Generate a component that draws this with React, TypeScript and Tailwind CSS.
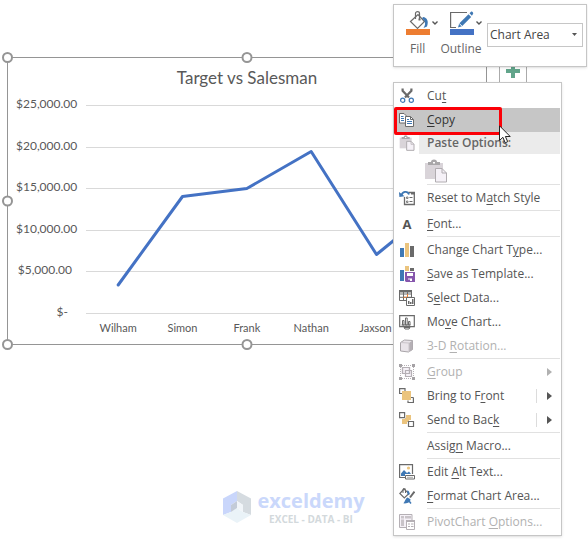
import type { ReactNode } from 'react';

const GRAY = '#6a6a6a';
const BLUE = '#3f78b4';
const TAN = '#ebc47e';
const FADED = '#b5b0b5';

const gridLines = [0, 1, 2, 3, 4, 5];
const axisLabels = ['$25,000.00', '$20,000.00', '$15,000.00', '$10,000.00', '$5,000.00'];
const salesmen = ['Wilham', 'Simon', 'Frank', 'Nathan', 'Jaxson', ''];

/* ---------- Icons ---------- */

function Icon({ children }: { children?: ReactNode }) {
  return (
    <svg viewBox="0 0 16 16" className="h-4 w-4 shrink-0" fill="none" aria-hidden="true">
      {children}
    </svg>
  );
}

function CutIcon() {
  return (
    <Icon>
      <path d="M3.6 .5v2.2L10 9.6M12.4 .5v2.2L6 9.6" stroke={GRAY} strokeWidth="2.2" />
      <circle cx="3.7" cy="12.2" r="2.1" stroke={BLUE} strokeWidth="1.2" />
      <circle cx="12.3" cy="12.2" r="2.1" stroke={BLUE} strokeWidth="1.2" />
    </Icon>
  );
}

function CopyIcon() {
  return (
    <Icon>
      <path d="M.5 1.500h4.500l2 2v7.500h-6.500z" fill="#fff" stroke={GRAY} />
      <path d="M2 4.500h2.500M2 6.500h3M2 8.500h3" stroke={BLUE} />
      <path d="M6.500 4.500h5l3 3v7h-8z" fill="#fff" stroke={GRAY} />
      <path d="M11.500 4.500v3h3" stroke={GRAY} />
      <path d="M8 7.500h2M8 9.500h5M8 11.500h5" stroke={BLUE} />
    </Icon>
  );
}

function PasteIcon({ large }: { large?: boolean }) {
  return (
    <svg viewBox="0 0 22 24" className={large ? 'h-6 w-[22px]' : 'h-4 w-4 shrink-0'} aria-hidden="true">
      <path d="M0 4h18v16H0z" fill="#d9d4d9" />
      <path d="M3 6V3h3a3 2.500 0 0 1 6 0h3v3z" fill="#a9a7a9" />
      <path d="M8 3h2v1.500H8z" fill="#fff" />
      <path d="M10.500 9.500h6.500l4.500 4.500v9h-11z" fill="#f5f1f7" stroke="#b0acb0" strokeWidth={large ? 1 : 1.5} />
      <path d="M17 9.500V14h4.500" fill="none" stroke="#b0acb0" />
    </svg>
  );
}

function ResetIcon() {
  return (
    <Icon>
      <path d="M9.500 2.500H15.300V14.500H5.500V7" stroke={GRAY} strokeWidth="1.300" />
      <path d="M12 2h4v2.500h-4z" fill={GRAY} />
      <path d="M7.500 7h1.500v1.500H7.500zM7.500 11h1.500v1.500H7.500z" stroke={GRAY} strokeWidth=".8" />
      <path d="M10.500 7.500h3M10.500 11.500h3" stroke={GRAY} />
      <path d="M2.500 5.500C3 1.500 8.500.3 10 4.500" stroke={BLUE} strokeWidth="1.800" />
      <path d="M0 2l.4 5 5.200-.7z" fill={BLUE} />
    </Icon>
  );
}

function FontIcon() {
  return <span className="w-4 shrink-0 text-center text-[13px] leading-4 font-bold text-[#555]">A</span>;
}

function ChartTypeIcon() {
  return (
    <Icon>
      <path d="M1 6h4v9H1z" fill={BLUE} />
      <path d="M6 1h4v14H6z" fill={TAN} />
      <path d="M11 4h4v11h-4z" fill={GRAY} />
    </Icon>
  );
}

function TemplateIcon() {
  return (
    <Icon>
      <path d="M1 4h4v11H1z" fill={BLUE} />
      <path d="M6 0h4v5H6z" fill={TAN} />
      <path d="M11 2h4v3h-4z" fill={GRAY} />
      <path d="M6 6h10v10H7l-1-1z" fill="#8757ad" />
      <path d="M8 7h6v3H8zM9 12.500h4V15h-2v-1.500H9z" fill="#fff" />
    </Icon>
  );
}

function SelectDataIcon() {
  return (
    <Icon>
      <path d="M.5.5h12v10H.5zM.5 4h12M.5 7.300h12M4.500 2v8.500M8.500 2v4" stroke={GRAY} />
      <path d="M0 0h13v2.500H0z" fill={GRAY} />
      <path d="M4.500 7.300h4V4" stroke="#ed7d31" />
      <path d="M7.500 7.500h8v8h-8z" fill="#fff" stroke={GRAY} />
      <path d="M9 11h1.500v3H9zM11 12h1.500v2H11zM13 9h1.500v5H13z" fill={GRAY} />
    </Icon>
  );
}

function MoveChartIcon() {
  return (
    <Icon>
      <path d="M.7 1.700h14.600v11H.7z" stroke={GRAY} strokeWidth="1.200" />
      <path d="M3.500 6.500h1.500V11H3.500zM6.500 4h1.700v7H6.500zM9.500 7.500H11V11H9.500z" stroke={GRAY} />
      <path d="M2.500 11h9" stroke={GRAY} />
      <path d="M5 13.500h6l-1 1.500H6z" fill="#fff" stroke={GRAY} />
    </Icon>
  );
}

function RotationIcon() {
  return (
    <Icon>
      <path d="M1.500 4.500l4-2.500 8 .5v9L9.500 14l-8-1z" fill="#e9e4e9" stroke="#a9a5a9" strokeLinejoin="round" />
      <path d="M10 5l3.500-2.500v9L10 14z" fill="#b5b0b5" />
      <path d="M1.500 4.500L10 5v9" stroke="#c9c4c9" />
    </Icon>
  );
}

function GroupIcon() {
  return (
    <Icon>
      <path d="M3.500 3.500h7v6h-7zM6.500 6.500h6v6h-6z" fill="#f5f1f7" stroke={FADED} strokeWidth="1.200" />
      <path d="M3.500 3.500h7v6h-7z" stroke={FADED} strokeWidth="1.200" />
      <path d="M3 1.500h10M3 14.500h10M1.500 3v10M14.500 3v10" stroke={FADED} strokeDasharray="1 1" />
      <path d="M0 0h3v3H0zM13 0h3v3h-3zM0 13h3v3H0zM13 13h3v3h-3z" fill="#a5a2a5" />
    </Icon>
  );
}

function FrontIcon() {
  return (
    <Icon>
      <path d="M.6 6V.6h5.400V3M14.400 9.500v5H9v-2M.6 5.500H3M12 9.500h2.400" stroke={GRAY} strokeWidth="1.200" />
      <path d="M3 3h9v9H3z" fill={TAN} />
    </Icon>
  );
}

function BackIcon() {
  return (
    <Icon>
      <path d="M7 3h5v5H7zM3 7h5v5H3zM6 6h4v4H6z" fill={TAN} />
      <path d="M.6.600h5v5h-5zM9.500 9.500h5v5h-5z" fill="#fff" stroke={GRAY} strokeWidth="1.200" />
    </Icon>
  );
}

function AltTextIcon() {
  return (
    <Icon>
      <path d="M13.500 10V.6H.6v12.900H6" stroke={GRAY} strokeWidth="1.200" />
      <circle cx="9.500" cy="4" r="1.600" fill={TAN} />
      <path d="M2 12V9.500L5 6l3 3 2-1.500 2 2.500H6v2z" fill={BLUE} />
      <path d="M6.500 11.500h9v3.500h-9z" fill="#fff" stroke={GRAY} />
      <path d="M8 13.300h6" stroke="#aaa" />
    </Icon>
  );
}

function FormatIcon() {
  return (
    <Icon>
      <path d="M5 1L.8 5.500l4.500 4.500L10 5.500z" fill="#fff" stroke={GRAY} strokeWidth="1.200" />
      <path d="M4 5V1.500C4-.2 6.500-.2 6.500 1.500V5" stroke={GRAY} />
      <path d="M8 2.500c2 0 3 1.500 2.200 5L8.500 6z" fill={BLUE} />
      <path d="M15.500 3.500L11 9.500" stroke={GRAY} strokeWidth="2" />
      <path d="M8.500 9.500l3 1.800c0 3-2.500 4.500-7.500 4 2-.6 2-4.600 4.500-5.800z" fill={BLUE} />
      <path d="M10 13l2 2.500" stroke={BLUE} strokeWidth="1.500" />
    </Icon>
  );
}

function PivotIcon() {
  return (
    <Icon>
      <path d="M.5.500h12.500v13H.5z" fill="#f5f1f7" stroke={FADED} />
      <path d="M2 2h3v2.500H2zM6 2h6v2.500H6zM2 5.500h3V12H2z" fill="#c9c4c9" />
      <path d="M7.500 6.500h8v9h-8z" fill="#fff" stroke={FADED} />
      <path d="M7 6h9v2H7z" fill={FADED} />
      <path d="M9 10h2M12 10h2.500M9 12.500h2M12 12.500h2.500" stroke={FADED} strokeWidth="1.200" />
    </Icon>
  );
}

/* ---------- Chart ---------- */

function Handle({ className }: { className: string }) {
  return <span className={`absolute h-[11px] w-[11px] rounded-full border-2 border-[#959595] bg-white ${className}`} />;
}

function Chart() {
  return (
    <section className="relative mt-[57px] ml-[7px] w-full max-w-[480px] border border-[#959595] py-2 font-[Lato,sans-serif] text-[#595959]">
      <h1 className="text-center text-[17px] leading-6">Target vs Salesman</h1>
      <div className="mt-[7px] flex pr-3.5 pl-2">
        <div className="flex h-[222px] w-14 flex-col justify-between text-right text-[12px] leading-[14px]">
          {axisLabels.map((label) => (
            <span key={label}>{label}</span>
          ))}
          <span className="pr-1">$-</span>
        </div>
        <div className="ml-3.5 flex-1 pt-2">
          <svg viewBox="0 0 384 210" preserveAspectRatio="none" className="h-[210px] w-full" fill="none">
            {gridLines.map((n) => (
              <path key={n} d={`M0 ${Math.round(n * 41.6) + 0.5}H384`} stroke="#d9d9d9" />
            ))}
            <path
              d="M32 180L96 91.500L160 83.500L224 46.500L289 149.500L352 98"
              stroke="#4472c4"
              strokeWidth="3"
              strokeLinecap="round"
              strokeLinejoin="round"
            />
          </svg>
          <div className="mt-[5px] grid grid-cols-6 text-center text-[11px] leading-4">
            {salesmen.map((name) => (
              <span key={name}>{name}</span>
            ))}
          </div>
        </div>
      </div>
      <Handle className="-top-1.5 -left-1.5" />
      <Handle className="-top-1.5 left-1/2 -translate-x-1/2" />
      <Handle className="top-1/2 -left-1.5 -translate-y-1/2" />
      <Handle className="-bottom-1.5 -left-1.5" />
      <Handle className="-bottom-1.5 left-1/2 -translate-x-1/2" />
      <button
        type="button"
        aria-label="Chart Elements"
        className="absolute -top-px left-[491px] flex h-7 w-7 items-center justify-center border border-[#ababab] bg-white"
      >
        <svg viewBox="0 0 14 14" className="h-3.5 w-3.5">
          <path d="M5 0h4v5h5v4H9v5H5V9H0V5h5z" fill="#62a58b" />
        </svg>
      </button>
    </section>
  );
}

/* ---------- Mini toolbar ---------- */

function Chevron() {
  return (
    <svg viewBox="0 0 6 4" className="h-1 w-1.5" fill="none">
      <path d="M.5.500L3 3L5.500.500" stroke="#555" strokeWidth="1.400" />
    </svg>
  );
}

function MiniToolbar() {
  return (
    <div className="absolute top-1 left-[393px] flex h-[63px] w-[194px] border border-[#c6c6c6] bg-white pl-3 text-[12px] leading-4 text-[#666] shadow-sm">
      <button type="button" className="mt-1.5 flex w-8 flex-col items-start">
        <span className="flex items-center gap-0.5">
          <svg viewBox="0 0 24 24" className="h-6 w-6" fill="none">
            <path d="M4.500 10.500L12 3.500l6.500 7-7 7z" stroke={GRAY} strokeWidth="1.200" />
            <path d="M9.500 8V2.500C9.500 0 13.500 0 13.500 2.500V9" stroke={GRAY} strokeWidth="1.200" />
            <path d="M12.500 7.500h2v2h-2z" fill={GRAY} />
            <path d="M17 6c4 .5 6 4 4 9.500l-3.500 1.500c2.500-4 2-7-1.500-9.500z" fill={BLUE} />
            <path d="M0 18h24v6H0z" fill="#ed7d31" />
          </svg>
          <Chevron />
        </span>
        <span className="mt-1.5 ml-1">Fill</span>
      </button>
      <button type="button" className="mt-1.5 ml-px flex w-11 flex-col items-center">
        <span className="ml-2.5 flex items-center gap-0.5">
          <svg viewBox="0 0 24 24" className="h-6 w-6" fill="none">
            <path d="M17 1.500H.6v15H6" stroke={GRAY} strokeWidth="1.200" />
            <path d="M8 16.500l1.200-4L18.500 3.300l2.700 2.700-9.200 9.200z" fill={BLUE} />
            <path d="M19.500 2.300L21 .8c1-.8 3 1.200 2 2.200L21.900 4.800z" fill={BLUE} />
            <path d="M9.200 12.500l2.800 2.700" stroke="#fff" />
            <path d="M0 18h24v6H0z" fill="#4472c4" />
          </svg>
          <Chevron />
        </span>
        <span className="mt-1.5">Outline</span>
      </button>
      <label className="relative mt-[18px] ml-1 h-6 w-24">
        <select
          aria-label="Chart element"
          className="h-6 w-full appearance-none border border-[#c6c6c6] bg-white pl-0.5 text-[12px] text-[#444]"
        >
          <option>Chart Area</option>
        </select>
        <svg viewBox="0 0 5 3" className="absolute top-2.5 right-1.5 h-[3px] w-[5px]">
          <path d="M0 0h5L2.500 3z" fill="#555" />
        </svg>
      </label>
    </div>
  );
}

/* ---------- Context menu ---------- */

type ItemProps = {
  before?: string;
  hotkey: string;
  after?: string;
  icon?: ReactNode;
  disabled?: boolean;
  active?: boolean;
  arrow?: boolean;
  split?: boolean;
};

function Item({ before, hotkey, after, icon, disabled, active, arrow, split }: ItemProps) {
  return (
    <button
      type="button"
      role="menuitem"
      disabled={disabled}
      className={`flex h-6 w-full items-center gap-3 pl-1 text-left ${disabled ? 'text-[#b1b1b1]' : ''} ${
        active ? 'bg-[#c6c6c6] text-[#333]' : ''
      }`}
    >
      {icon ?? <Icon />}
      <span className="flex-1 whitespace-nowrap">
        {before}
        <span className="underline underline-offset-2">{hotkey}</span>
        {after}
      </span>
      {arrow && (
        <span className={`flex h-3.5 w-6 items-center border-l pl-2.5 ${split ? 'border-[#dcdcdc]' : 'border-transparent'}`}>
          <svg viewBox="0 0 5 8" className="h-2 w-[5px]">
            <path d="M0 0l5 4-5 4z" fill="currentColor" />
          </svg>
        </span>
      )}
    </button>
  );
}

function Separator() {
  return <div role="separator" className="ml-8 h-0.5 border-t border-[#e1e1e1]" />;
}

function ContextMenu() {
  return (
    <div
      role="menu"
      className="absolute top-[82px] left-[393px] w-[169px] border border-[#c6c6c6] bg-white p-px text-[12px] leading-4 text-[#555] shadow-sm"
    >
      <Item before="Cu" hotkey="t" icon={<CutIcon />} />
      <div className="relative">
        <Item hotkey="C" after="opy" icon={<CopyIcon />} active />
        <div className="absolute -top-px -left-px z-10 h-7 w-[108px] rounded-xs border-3 border-[#fb0007]" />
        <svg viewBox="0 0 12 19" className="absolute top-[17px] left-[104px] z-20 h-[19px] w-3">
          <path d="M.5.8v14.700l3.400-3.200 2.300 5.500 2.500-1.100-2.300-5.200h4.800z" fill="#fff" stroke="#222" />
        </svg>
      </div>
      <div className="flex h-[22px] items-center gap-1 pl-1">
        <PasteIcon />
        <span className="h-full flex-1 bg-[#ebebeb] pl-2 leading-[22px] font-semibold text-[#666]">Paste Options:</span>
      </div>
      <button type="button" aria-label="Paste" disabled className="block h-[30px] pt-1 pl-[30px] align-top">
        <PasteIcon large />
      </button>
      <Separator />
      <Item before="Reset to M" hotkey="a" after="tch Style" icon={<ResetIcon />} />
      <Separator />
      <Item hotkey="F" after="ont..." icon={<FontIcon />} />
      <Separator />
      <Item before="Change Chart T" hotkey="y" after="pe..." icon={<ChartTypeIcon />} />
      <Item hotkey="S" after="ave as Template..." icon={<TemplateIcon />} />
      <Item before="S" hotkey="e" after="lect Data..." icon={<SelectDataIcon />} />
      <Item before="Mo" hotkey="v" after="e Chart..." icon={<MoveChartIcon />} />
      <Item before="3-D " hotkey="R" after="otation..." icon={<RotationIcon />} disabled />
      <Separator />
      <Item hotkey="G" after="roup" icon={<GroupIcon />} disabled arrow />
      <Item before="Bring to F" hotkey="r" after="ont" icon={<FrontIcon />} arrow split />
      <Item before="Send to Bac" hotkey="k" icon={<BackIcon />} arrow split />
      <Separator />
      <Item before="Assig" hotkey="n" after=" Macro..." />
      <Separator />
      <Item before="Edit " hotkey="A" after="lt Text..." icon={<AltTextIcon />} />
      <Item hotkey="F" after="ormat Chart Area..." icon={<FormatIcon />} />
      <Separator />
      <Item before="PivotChart " hotkey="O" after="ptions..." icon={<PivotIcon />} disabled />
    </div>
  );
}

/* ---------- Watermark ---------- */

function Watermark() {
  return (
    <footer className="mt-[144px] flex items-center justify-center gap-1.5">
      <svg viewBox="0 0 28 32" className="h-8 w-7">
        <path d="M14 0v10l-6 4v7L0 24V7.500z" fill="#c9d6fb" />
        <path d="M14 0l14 7.500V24l-8-3v-7l-6-4z" fill="#d5dbe0" />
        <path d="M0 24l8-3 6-4 6 4 8 3-14 8z" fill="#eaf3f8" />
        <path d="M8 14l6-4v7l-6 4z" fill="#c3cbd8" />
        <path d="M14 10l6 4v7l-6-4z" fill="#f1f5f9" />
      </svg>
      <div className="flex flex-col items-center">
        <span className="text-[20px] leading-6 font-bold text-[#cad8fb]">exceldemy</span>
        <span className="text-[10px] leading-3 font-bold text-[#d3d9dc]">EXCEL - DATA - BI</span>
      </div>
    </footer>
  );
}

export default function App() {
  return (
    <main className="relative flow-root min-h-screen overflow-hidden bg-white font-['Open_Sans','Noto_Sans',sans-serif]">
      <Chart />
      <Watermark />
      <MiniToolbar />
      <ContextMenu />
    </main>
  );
}
